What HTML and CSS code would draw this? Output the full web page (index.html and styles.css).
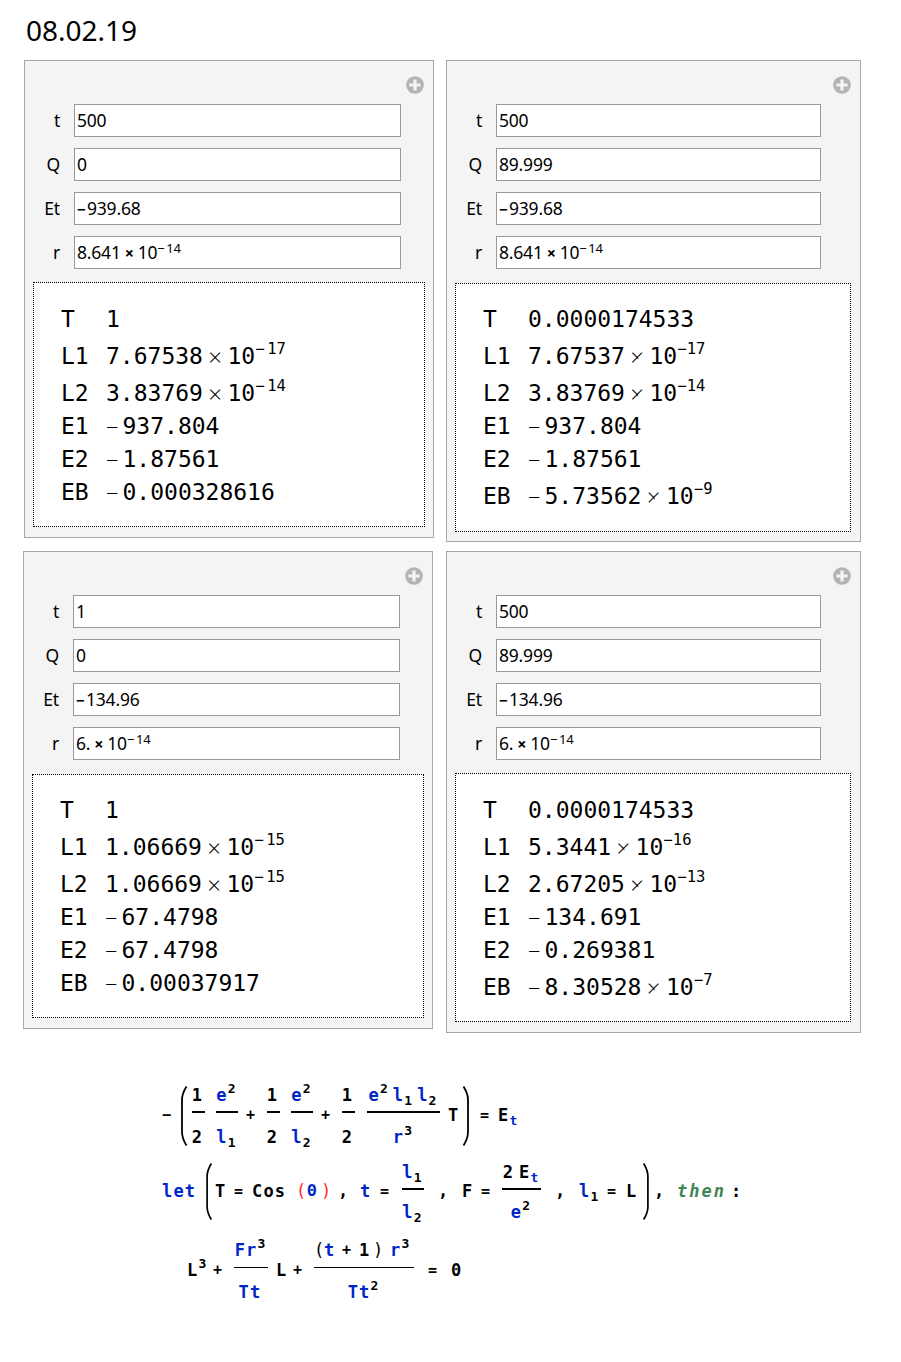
FILE: index.html
```
<!DOCTYPE html>
<html lang="en">
<head>
<meta charset="utf-8">
<title>08.02.19</title>
<link rel="stylesheet" href="styles.css">
</head>
<body>
<svg class="defs" width="0" height="0">
  <symbol id="plus" viewBox="0 0 18 18"><circle cx="9" cy="9" r="8.8" fill="#b3b3b3"/><path d="M9 3.4V14.6M3.4 9H14.6" stroke="#f4f4f4" stroke-width="3.2"/></symbol>
  <symbol id="open" viewBox="0 0 8 60"><path d="M6.5 .5C3 6 2 9 2 14V46C2 51 3 54 6.5 59.5" fill="none" stroke="#000" stroke-width="1.8"/></symbol>
  <symbol id="close" viewBox="0 0 8 60"><path d="M1.5 .5C5 6 6 9 6 14V46C6 51 5 54 1.5 59.5" fill="none" stroke="#000" stroke-width="1.8"/></symbol>
</svg>
<h1>08.02.19</h1>
<main class="panels">
  <div class="column column-left">
    <section class="panel">
      <svg class="plus"><use href="#plus"/></svg>
      <div class="controls">
        <label>t</label><div class="field">500</div>
        <label>Q</label><div class="field">0</div>
        <label>Et</label><div class="field"><b class="neg">−</b>939.68</div>
        <label>r</label><div class="field">8.641<b class="mul">×</b>10<sup><i>−</i>14</sup></div>
      </div>
      <div class="output">
        <div class="row"><span>T</span><span>1</span></div>
        <div class="row tall"><span>L1</span><span>7.67538<b class="times">×</b>10<sup><i>−</i>17</sup></span></div>
        <div class="row tall"><span>L2</span><span>3.83769<b class="times">×</b>10<sup><i>−</i>14</sup></span></div>
        <div class="row"><span>E1</span><span><b class="minus">−</b>937.804</span></div>
        <div class="row"><span>E2</span><span><b class="minus">−</b>1.87561</span></div>
        <div class="row"><span>EB</span><span><b class="minus">−</b>0.000328616</span></div>
      </div>
    </section>
    <section class="panel shifted low">
      <svg class="plus"><use href="#plus"/></svg>
      <div class="controls">
        <label>t</label><div class="field">1</div>
        <label>Q</label><div class="field">0</div>
        <label>Et</label><div class="field"><b class="neg">−</b>134.96</div>
        <label>r</label><div class="field">6.<b class="mul">×</b>10<sup><i>−</i>14</sup></div>
      </div>
      <div class="output">
        <div class="row"><span>T</span><span>1</span></div>
        <div class="row tall"><span>L1</span><span>1.06669<b class="times">×</b>10<sup><i>−</i>15</sup></span></div>
        <div class="row tall"><span>L2</span><span>1.06669<b class="times">×</b>10<sup><i>−</i>15</sup></span></div>
        <div class="row"><span>E1</span><span><b class="minus">−</b>67.4798</span></div>
        <div class="row"><span>E2</span><span><b class="minus">−</b>67.4798</span></div>
        <div class="row"><span>EB</span><span><b class="minus">−</b>0.00037917</span></div>
      </div>
    </section>
  </div>
  <div class="column column-right">
    <section class="panel low">
      <svg class="plus"><use href="#plus"/></svg>
      <div class="controls">
        <label>t</label><div class="field">500</div>
        <label>Q</label><div class="field">89.999</div>
        <label>Et</label><div class="field"><b class="neg">−</b>939.68</div>
        <label>r</label><div class="field">8.641<b class="mul">×</b>10<sup><i>−</i>14</sup></div>
      </div>
      <div class="output">
        <div class="row"><span>T</span><span>0.0000174533</span></div>
        <div class="row tall"><span>L1</span><span>7.67537<b class="times">×</b>10<sup><i>−</i>17</sup></span></div>
        <div class="row tall"><span>L2</span><span>3.83769<b class="times">×</b>10<sup><i>−</i>14</sup></span></div>
        <div class="row"><span>E1</span><span><b class="minus">−</b>937.804</span></div>
        <div class="row"><span>E2</span><span><b class="minus">−</b>1.87561</span></div>
        <div class="row tall"><span>EB</span><span><b class="minus">−</b>5.73562<b class="times">×</b>10<sup><i>−</i>9</sup></span></div>
      </div>
    </section>
    <section class="panel">
      <svg class="plus"><use href="#plus"/></svg>
      <div class="controls">
        <label>t</label><div class="field">500</div>
        <label>Q</label><div class="field">89.999</div>
        <label>Et</label><div class="field"><b class="neg">−</b>134.96</div>
        <label>r</label><div class="field">6.<b class="mul">×</b>10<sup><i>−</i>14</sup></div>
      </div>
      <div class="output">
        <div class="row"><span>T</span><span>0.0000174533</span></div>
        <div class="row tall"><span>L1</span><span>5.3441<b class="times">×</b>10<sup><i>−</i>16</sup></span></div>
        <div class="row tall"><span>L2</span><span>2.67205<b class="times">×</b>10<sup><i>−</i>13</sup></span></div>
        <div class="row"><span>E1</span><span><b class="minus">−</b>134.691</span></div>
        <div class="row"><span>E2</span><span><b class="minus">−</b>0.269381</span></div>
        <div class="row tall"><span>EB</span><span><b class="minus">−</b>8.30528<b class="times">×</b>10<sup><i>−</i>7</sup></span></div>
      </div>
    </section>
  </div>
</main>
<section class="math">
  <div class="eq eq-energy">
    <span class="op">−</span>
    <svg class="paren"><use href="#open"/></svg>
    <div class="frac half"><span>1</span><hr><span>2</span></div>
    <div class="frac term"><span><em>e</em><sup>2</sup></span><hr><span><em>l</em><sub>1</sub></span></div>
    <span class="op">+</span>
    <div class="frac half"><span>1</span><hr><span>2</span></div>
    <div class="frac term"><span><em>e</em><sup>2</sup></span><hr><span><em>l</em><sub>2</sub></span></div>
    <span class="op">+</span>
    <div class="frac half"><span>1</span><hr><span>2</span></div>
    <div class="frac product"><span><em>e</em><sup>2</sup><em class="gap">l</em><sub>1</sub><em class="gap">l</em><sub>2</sub></span><hr><span><em>r</em><sup>3</sup></span></div>
    <span>T</span>
    <svg class="paren"><use href="#close"/></svg>
    <span class="op">=</span>
    <span>E<sub class="blue">t</sub></span>
  </div>
  <div class="eq eq-let">
    <em>let</em>
    <svg class="paren"><use href="#open"/></svg>
    <span>T</span>
    <span class="op">=</span>
    <span>Cos</span>
    <span class="red">(</span>
    <em class="theta">Θ</em>
    <span class="red">)</span>
    <span>,</span>
    <em>t</em>
    <span class="op">=</span>
    <div class="frac term"><span><em>l</em><sub>1</sub></span><hr><span><em>l</em><sub>2</sub></span></div>
    <span>,</span>
    <span>F</span>
    <span class="op">=</span>
    <div class="frac force"><span>2<span class="unit">E</span><sub class="blue">t</sub></span><hr><span><em>e</em><sup>2</sup></span></div>
    <span>,</span>
    <span><em>l</em><sub>1</sub></span>
    <span class="op">=</span>
    <span>L</span>
    <svg class="paren"><use href="#close"/></svg>
    <span>,</span>
    <span class="then">then</span>
    <span>:</span>
  </div>
  <div class="eq eq-cubic">
    <span>L<sup>3</sup></span>
    <span class="op">+</span>
    <div class="frac linear"><span><em>Fr</em><sup>3</sup></span><hr><span><em>Tt</em></span></div>
    <span>L</span>
    <span class="op">+</span>
    <div class="frac constant"><span class="sum"><span class="thin">(</span><em>t</em><span class="op">+</span><span>1</span><span class="thin">)</span><span><em>r</em><sup>3</sup></span></span><hr><span><em>Tt</em><sup>2</sup></span></div>
    <span class="op">=</span>
    <span>0</span>
  </div>
</section>
</body>
</html>
```
FILE: styles.css
```
* { box-sizing: border-box; }
body {
  margin: 0;
  width: 901px;
  height: 1362px;
  background: #fff;
  color: #000;
  font-family: "Noto Sans", sans-serif;
}
.defs { display: block; }
h1 {
  margin: 0;
  padding: 10px 0 0 26px;
  height: 60px;
  font-size: 28px;
  font-weight: 400;
  line-height: 40px;
}
b, em, i { font-style: normal; font-weight: inherit; }
sup, sub { line-height: 0; }

/* Panels */
.panels { display: flex; gap: 12px; padding-left: 24px; height: 1024px; }
.column { display: flex; flex-direction: column; }
.column-left { width: 410px; gap: 13px; }
.column-right { width: 415px; gap: 9px; }
.panel {
  display: flex;
  flex-direction: column;
  height: 478px;
  padding: 15px 9px 10px 0;
  border: 1px solid #a8a8a8;
  background: #f4f4f4;
}
.column-right .panel { height: 482px; padding-bottom: 9px; }
.column-right .panel:not(.low) { padding-bottom: 10px; }
.shifted { margin-left: -1px; margin-right: 1px; }
.plus { flex: none; align-self: flex-end; width: 18px; height: 18px; margin-bottom: 10px; }
.controls {
  display: grid;
  grid-template-columns: 49px 1fr;
  grid-auto-rows: 33px;
  row-gap: 11px;
  margin-right: 23px;
  font-size: 17.5px;
  letter-spacing: -.2px;
  line-height: 32px;
}
.column-right .controls { margin-right: 30px; }
.controls label { padding-right: 14px; text-align: right; }
.field {
  padding-left: 2px;
  border: 1px solid #999;
  background: #fff;
  line-height: 30px;
  white-space: nowrap;
}
.neg { display: inline-block; width: 10px; font-weight: 700; font-size: 15px; line-height: 15px; }
.mul { display: inline-block; width: 17px; text-align: center; font-size: 16px; font-weight: 700; line-height: 15px; }
.field sup { font-size: 13px; vertical-align: 6.5px; }
.field sup i { display: inline-block; width: 9px; line-height: 13px; }

.output {
  flex: 1;
  margin: 13px 0 0 8px;
  padding: 20px 0 0 27px;
  border: 1px dotted #000;
  background: #fff;
  font: 23px/32px "DejaVu Sans Mono", monospace;
  letter-spacing: 0;
}
.column-left .output { margin-right: -1px; }
.low .output { margin-top: 14px; padding-top: 19px; }
.row { display: grid; grid-template-columns: 45px 1fr; height: 33px; white-space: nowrap; }
.row.tall { height: 37px; padding-top: 4px; }
.minus {
  display: inline-block;
  position: relative;
  top: 1px;
  width: 16.5px;
  font-family: "Open Sans", sans-serif;
  font-size: 22px;
  font-weight: 300;
  line-height: 20px;
}
.times {
  display: inline-block;
  position: relative;
  top: 2px;
  width: 24.5px;
  text-align: center;
  font-family: "Open Sans", sans-serif;
  font-size: 24px;
  font-weight: 300;
  line-height: 24px;
}
.column-right .times { clip-path: polygon(0 0, 100% 0, 100% 54%, 54% 54%, 54% 100%, 0 100%); }
.output sup { font-size: 15.5px; vertical-align: 10.5px; }
.output sup i { display: inline-block; width: 12px; line-height: 15px; }
.column-right .output sup i { width: 9.5px; }

/* Formulas */
.math { font: 700 17px/22px "DejaVu Sans Mono", monospace; letter-spacing: 1.2px; white-space: nowrap; }
.eq { display: grid; align-items: start; justify-items: start; }
.eq-energy {
  grid-template-columns: 18px 12px 24px 30px 21px 24px 30px 21px 25px 81px 14px 18px 18px 30px;
  margin-left: 162px;
  height: 77px;
  line-height: 62px;
}
.eq-let {
  grid-template-columns: 43px 10px 19px 18px 44px 11px 14px 17px 22px 20px 22px 36px 24px 19px 21px 53px 24px 28px 19px 16px 12px 23px 54px 20px;
  margin-left: 162px;
  height: 78px;
  line-height: 60px;
}
.eq-cubic {
  grid-template-columns: 26px 21px 42px 17px 21px 114px 23px 20px;
  margin-left: 187px;
  line-height: 62px;
}
.math em, .blue { color: #0026c8; }
.math sup, .math sub { font-size: 13px; letter-spacing: 0; }
.math sup { vertical-align: 8px; }
.math sub { vertical-align: -4px; }
.math .op { font-size: 15px; }
.math .red { color: #ff2b2b; font-weight: 400; letter-spacing: 0; }
.math .thin { font-weight: 400; }
.math .then { color: #418555; font-style: italic; letter-spacing: 2px; }
.math .theta { font-size: 16px; letter-spacing: 0; }
.paren { width: 8px; height: 60px; margin-top: 2px; }
.eq-let .paren { height: 57px; }
.frac { display: flex; flex-direction: column; line-height: 22px; text-align: center; }
.frac > span { display: block; height: 22px; margin: 0 -7px 0 -9px; }
.frac hr { width: 100%; height: 2px; margin: 5px 0 13px; border: 0; background: #000; }
.eq-let .frac hr { margin-bottom: 11px; }
.eq-cubic .frac hr { height: 1px; margin-top: 6px; }
.half { width: 13px; }
.term { width: 22px; }
.product { width: 73px; }
.force { width: 39px; }
.linear { width: 34px; }
.constant { width: 100px; }
.gap { margin-left: 5px; }
.unit { margin-left: 5px; }
.frac > .sum { display: grid; grid-template-columns: 10px 18px 17px 14px 17px 24px; margin: 0; text-align: left; }
```
